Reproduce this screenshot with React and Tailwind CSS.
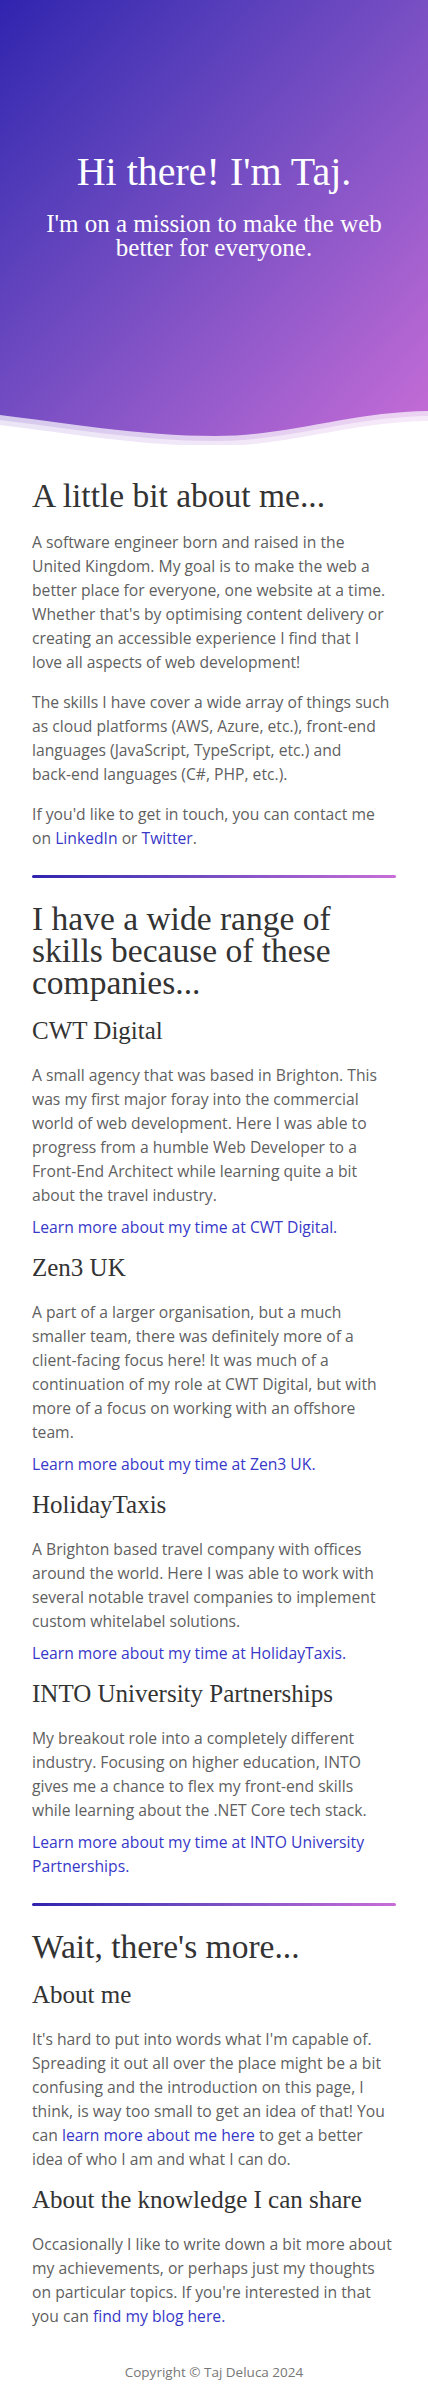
const companies = [
  {
    name: "CWT Digital",
    text: "A small agency that was based in Brighton. This was my first major foray into the commercial world of web development. Here I was able to progress from a humble Web Developer to a Front-End Architect while learning quite a bit about the travel industry.",
  },
  {
    name: "Zen3 UK",
    text: "A part of a larger organisation, but a much smaller team, there was definitely more of a client-facing focus here! It was much of a continuation of my role at CWT Digital, but with more of a focus on working with an offshore team.",
  },
  {
    name: "HolidayTaxis",
    text: "A Brighton based travel company with offices around the world. Here I was able to work with several notable travel companies to implement custom whitelabel solutions.",
  },
  {
    name: "INTO University Partnerships",
    text: (
      <>
        My breakout role into a completely different industry. Focusing on higher education, INTO gives me a chance to
        flex my front-end skills
        <br />
        while learning about the .NET Core tech stack.
      </>
    ),
  },
];

const Wave = () => (
  <svg
    className="absolute bottom-0 left-0 w-full h-[45px]"
    viewBox="0 0 428 45"
    preserveAspectRatio="none"
    aria-hidden="true"
  >
    <path d="M0,15 C60,22 140,36 215,36 C290,36 350,12 428,11 L428,45 L0,45 Z" fill="#fff" fillOpacity="0.7" />
    <path d="M0,20 C60,27 140,41 215,41 C290,41 350,17 428,16 L428,45 L0,45 Z" fill="#fff" fillOpacity="0.5" />
    <path d="M0,25 C60,32 140,46 215,46 C290,46 350,22 428,21 L428,45 L0,45 Z" fill="#fff" />
  </svg>
);

const Divider = () => (
  <div className="h-[3px] rounded-full bg-gradient-to-r from-[#3023ae] to-[#c86dd7] my-[25px]" />
);

const H2 = ({ children }) => (
  <h2 className="font-['Liberation_Serif',serif] text-[33.5px] leading-8 text-[#333] mb-4">
    {children}
  </h2>
);

const H3 = ({ children, first }) => (
  <h3
    className={
      first
        ? "font-['Liberation_Serif',serif] text-[25px] leading-8 text-[#333] mb-4"
        : "font-['Liberation_Serif',serif] text-[25px] leading-8 text-[#333] mt-[13px] mb-4"
    }
  >
    {children}
  </h3>
);

const A = ({ children }) => (
  <a href="#" className="text-[#3838c8]">
    {children}
  </a>
);

export default function App() {
  return (
    <div className="min-h-screen bg-white font-['Open_Sans',sans-serif] text-[#5f5f5f]">
      <header className="relative h-[445px] bg-gradient-to-br from-[#3023ae] to-[#c86dd7] flex flex-col items-center pt-[148px] text-white text-center font-['Liberation_Serif',serif]">
        <h1 className="text-[40px] leading-[48px]">Hi there! I'm Taj.</h1>
        <p className="mt-4 text-[25px] leading-6 px-8">
          I'm on a mission to make the web better for everyone.
        </p>
        <Wave />
      </header>

      <main className="px-8 pt-[35px] text-[15.7px] leading-6">
        <section>
          <H2>A little bit about me...</H2>
          <div className="pt-[2px]">
            <p className="mb-4">
              A software engineer born and raised in the United Kingdom. My goal is to make the web a better place for
              everyone, one website at a time. Whether that's by optimising content delivery or creating an accessible
              experience I find that I
              <br />
              love all aspects of web development!
            </p>
            <p className="mb-4">
              The skills I have cover a wide array of things such as cloud platforms (AWS, Azure, etc.), front-end
              languages (JavaScript, TypeScript, etc.) and
              <br />
              back-end languages (C#, PHP, etc.).
            </p>
            <p>
              If you'd like to get in touch, you can contact me on <A>LinkedIn</A> or <A>Twitter</A>.
            </p>
          </div>
        </section>

        <Divider />

        <section>
          <H2>I have a wide range of skills because of these companies...</H2>
          {companies.map((c, i) => (
            <div key={c.name}>
              <H3 first={i === 0}>{c.name}</H3>
              <p className="mb-2">{c.text}</p>
              <p>
                <A>Learn more about my time at {c.name}.</A>
              </p>
            </div>
          ))}
        </section>

        <Divider />

        <section>
          <H2>Wait, there's more...</H2>
          <H3 first>About me</H3>
          <p>
            It's hard to put into words what I'm capable of. Spreading it out all over the place might be a bit
            confusing and the introduction on this page, I think, is way too small to get an idea of that! You can{" "}
            <A>learn more about me here</A> to get a better idea of who I am and what I can do.
          </p>
          <H3>About the knowledge I can share</H3>
          <p>
            Occasionally I like to write down a bit more about my achievements, or perhaps just my thoughts on
            particular topics. If you're interested in that you can <A>find my blog here.</A>
          </p>
        </section>
      </main>

      <footer className="pt-[34px] pb-[18px] text-center text-[13.5px] leading-5 text-[#777]">
        Copyright © Taj Deluca 2024
      </footer>
    </div>
  );
}
